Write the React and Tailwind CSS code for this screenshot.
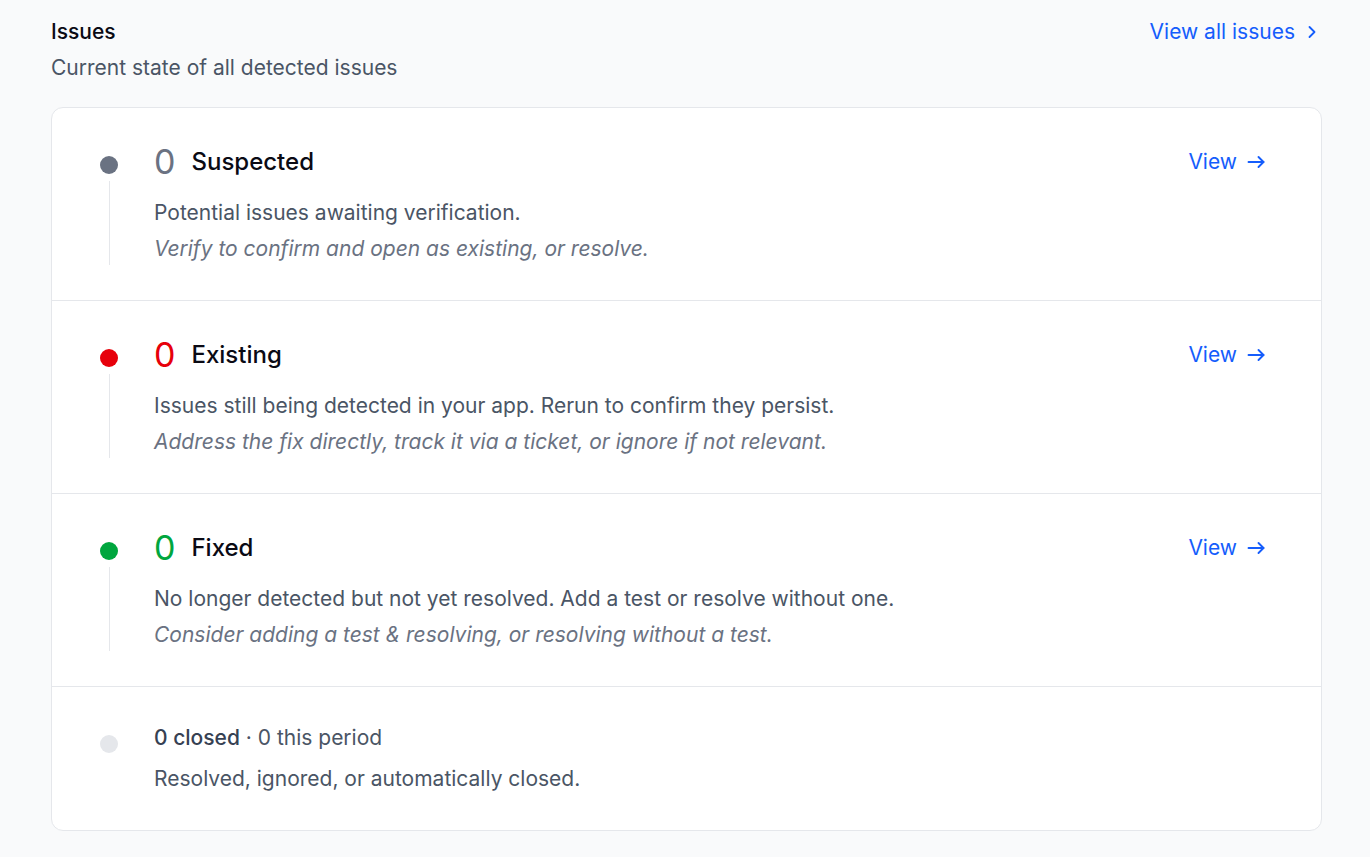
import React from "react";

const rows = [
  {
    count: 0,
    title: "Suspected",
    dot: "bg-[#6a7282]",
    num: "text-[#6a7282]",
    desc: "Potential issues awaiting verification.",
    hint: "Verify to confirm and open as existing, or resolve.",
  },
  {
    count: 0,
    title: "Existing",
    dot: "bg-[#e7000b]",
    num: "text-[#e7000b]",
    desc: "Issues still being detected in your app. Rerun to confirm they persist.",
    hint: "Address the fix directly, track it via a ticket, or ignore if not relevant.",
  },
  {
    count: 0,
    title: "Fixed",
    dot: "bg-[#00a63e]",
    num: "text-[#00a63e]",
    desc: "No longer detected but not yet resolved. Add a test or resolve without one.",
    hint: "Consider adding a test & resolving, or resolving without a test.",
  },
];

function ArrowRight() {
  return (
    <svg width="18" height="18" viewBox="0 0 18 18" fill="none" stroke="currentColor" strokeWidth="1.9" strokeLinecap="round" strokeLinejoin="round">
      <path d="M1.5 9h15" />
      <path d="M11.5 4l5 5-5 5" />
    </svg>
  );
}

function ChevronRight() {
  return (
    <svg width="20" height="20" viewBox="0 0 24 24" fill="none" stroke="currentColor" strokeWidth="2.2" strokeLinecap="round" strokeLinejoin="round">
      <path d="M9 6l6 6-6 6" />
    </svg>
  );
}

function StatusRow({ row }) {
  return (
    <div className="flex border-b border-[#e5e7eb] pl-[48px] pr-[56px] pt-[34px] pb-[35px]">
      <div className="flex w-[18px] flex-col items-center pt-[14px]">
        <div className={`h-[18px] w-[18px] shrink-0 rounded-full ${row.dot}`} />
        <div className="mt-[7px] w-px flex-1 bg-[#e5e7eb]" />
      </div>
      <div className="ml-[36px] flex-1">
        <div className="flex h-[40px] items-center justify-between">
          <div className="flex items-center gap-[16px]">
            <span className={`text-[34px] leading-[40px] ${row.num}`}>{row.count}</span>
            <span className="text-[24px] font-medium leading-[32px] text-[#0a0a14]">{row.title}</span>
          </div>
          <a className="flex items-center gap-[10px] text-[21px] leading-[32px] text-[#155dfc]">
            View
            <ArrowRight />
          </a>
        </div>
        <p className="mt-[15px] text-[21px] leading-[32px] text-[#4a5565]">{row.desc}</p>
        <p className="mt-[4px] text-[21px] italic leading-[32px] text-[#6a7282]">{row.hint}</p>
      </div>
    </div>
  );
}

export default function App() {
  return (
    <div
      className="min-h-[857px] bg-[#f9fafb] pl-[51px] pr-[48px] pt-[18px] pb-[26px]"
      style={{ fontFamily: "Inter, 'Noto Sans', sans-serif" }}
    >
      <div className="flex items-start justify-between">
        <div>
          <h2 className="text-[21px] font-medium leading-[28px] text-[#0a0a14]">Issues</h2>
          <p className="mt-[8px] text-[21px] leading-[28px] text-[#4a5565]">Current state of all detected issues</p>
        </div>
        <a className="flex items-center gap-[7px] text-[21px] leading-[28px] text-[#155dfc]">
          View all issues
          <ChevronRight />
        </a>
      </div>

      <div className="mt-[25px] overflow-hidden rounded-[12px] border border-[#e5e7eb] bg-white">
        {rows.map((row) => (
          <StatusRow key={row.title} row={row} />
        ))}
        <div className="flex pl-[48px] pr-[56px] pt-[35px] pb-[35px]">
          <div className="w-[18px] pt-[13px]">
            <div className="h-[18px] w-[18px] rounded-full bg-[#e5e7eb]" />
          </div>
          <div className="ml-[36px] flex-1">
            <p className="text-[21px] leading-[32px] text-[#4a5565]">
              <span className="font-medium text-[#364153]">0 closed</span> · 0 this period
            </p>
            <p className="mt-[9px] text-[21px] leading-[32px] text-[#4a5565]">
              Resolved, ignored, or automatically closed.
            </p>
          </div>
        </div>
      </div>
    </div>
  );
}
